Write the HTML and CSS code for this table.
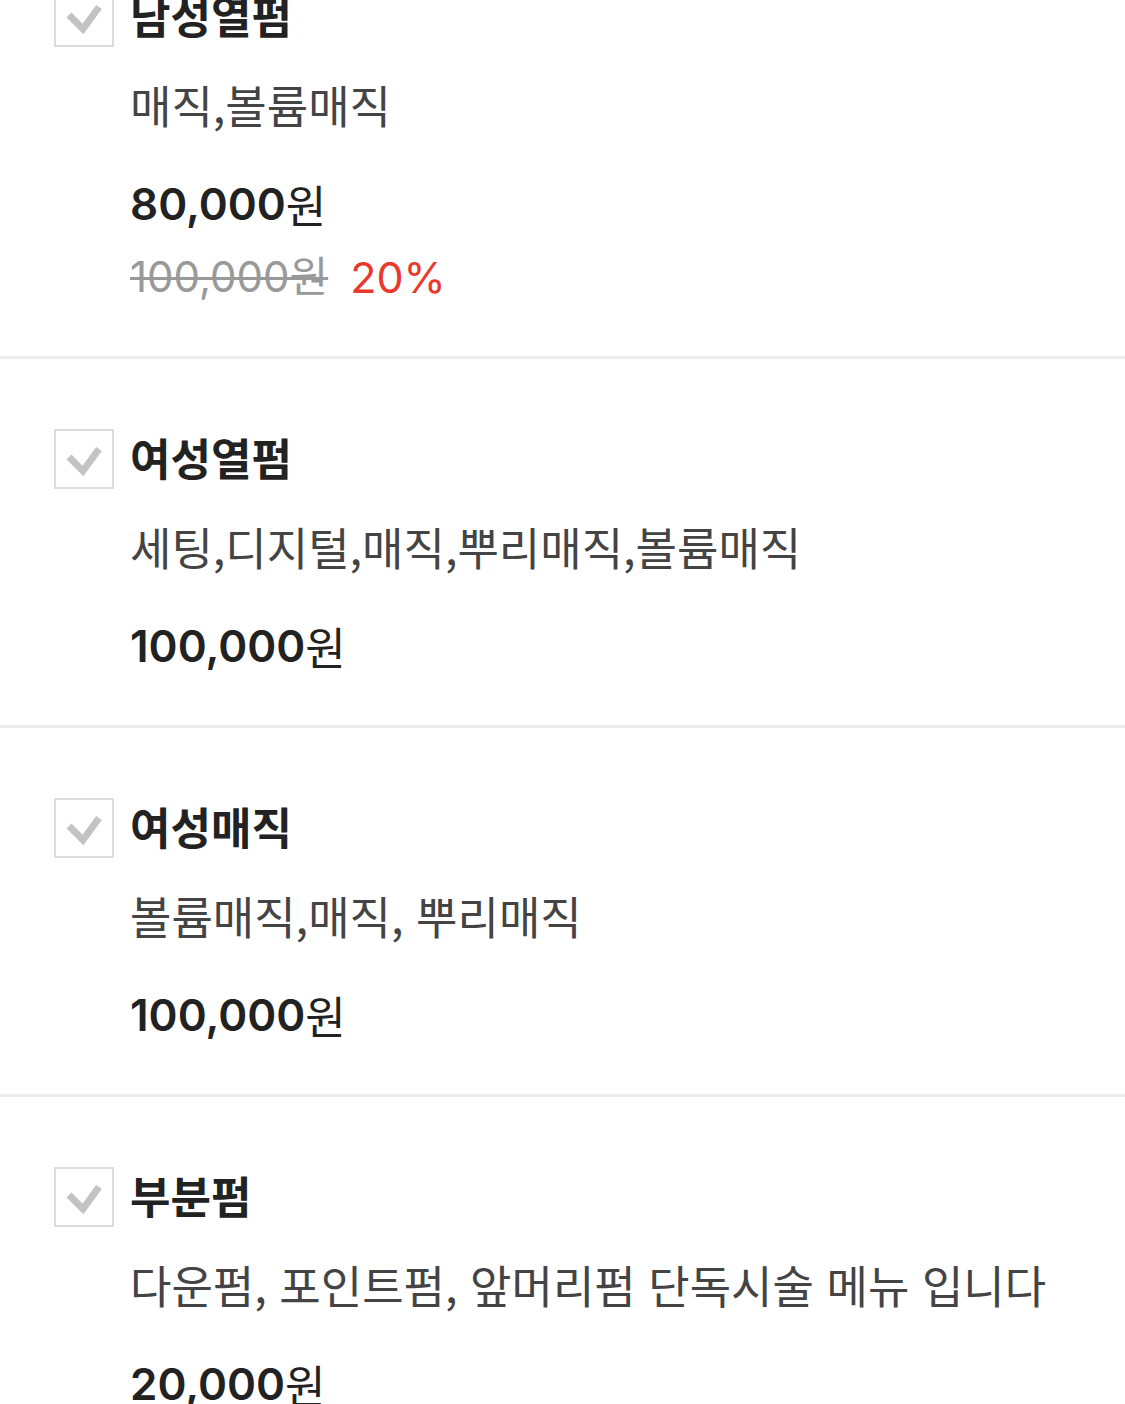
FILE: index.html
```html
<!DOCTYPE html>
<html lang="ko">
<head>
<meta charset="utf-8">
<link rel="stylesheet" href="styles.css">
</head>
<body>
<ul class="menu-list">
  <li class="item">
    <div class="head">
      <span class="check"><svg viewBox="0 0 60 60" width="60" height="60"><path d="M15 28 L29 42 L45 20" fill="none" stroke="#c3c3c3" stroke-width="7"/></svg></span>
      <span class="title">남성열펌</span>
    </div>
    <p class="desc">매직,볼륨매직</p>
    <p class="price">80,000<span class="won">원</span></p>
    <p class="sale"><span class="orig">100,000원</span><span class="rate">20%</span></p>
  </li>
  <li class="item">
    <div class="head">
      <span class="check"><svg viewBox="0 0 60 60" width="60" height="60"><path d="M15 28 L29 42 L45 20" fill="none" stroke="#c3c3c3" stroke-width="7"/></svg></span>
      <span class="title">여성열펌</span>
    </div>
    <p class="desc">세팅,디지털,매직,뿌리매직,볼륨매직</p>
    <p class="price">100,000<span class="won">원</span></p>
  </li>
  <li class="item">
    <div class="head">
      <span class="check"><svg viewBox="0 0 60 60" width="60" height="60"><path d="M15 28 L29 42 L45 20" fill="none" stroke="#c3c3c3" stroke-width="7"/></svg></span>
      <span class="title">여성매직</span>
    </div>
    <p class="desc">볼륨매직,매직, 뿌리매직</p>
    <p class="price">100,000<span class="won">원</span></p>
  </li>
  <li class="item">
    <div class="head">
      <span class="check"><svg viewBox="0 0 60 60" width="60" height="60"><path d="M15 28 L29 42 L45 20" fill="none" stroke="#c3c3c3" stroke-width="7"/></svg></span>
      <span class="title">부분펌</span>
    </div>
    <p class="desc">다운펌, 포인트펌, 앞머리펌 단독시술 메뉴 입니다</p>
    <p class="price">20,000<span class="won">원</span></p>
  </li>
</ul>
</body>
</html>
```
FILE: styles.css
```css
html, body {
  margin: 0;
  padding: 0;
  background: #fff;
}
body {
  font-family: "Noto Sans CJK KR", "Noto Sans", sans-serif;
  color: #222;
  overflow: hidden;
}
.menu-list {
  list-style: none;
  margin: -83px 0 0 0;
  padding: 0;
}
.item {
  padding: 70px 0 55px 54px;
}
.item + .item {
  border-top: 3px solid #eaedf0;
}
.head {
  display: flex;
  align-items: center;
  gap: 16px;
  height: 60px;
}
.check {
  width: 60px;
  height: 60px;
  box-sizing: border-box;
  border: 2px solid #dcdcdc;
  display: flex;
}
.check svg {
  margin: -2px;
}
.title {
  font-size: 44px;
  font-weight: 700;
  line-height: 60px;
  padding-bottom: 5px;
  color: #222;
}
.desc {
  margin: 34px 0 0 76px;
  height: 48px;
  font-size: 45px;
  line-height: 48px;
  color: #444;
  white-space: nowrap;
}
.price {
  margin: 51px 0 0 76px;
  height: 48px;
  display: flex;
  align-items: center;
  font-family: "Inter", "Noto Sans CJK KR", sans-serif;
  font-size: 44px;
  font-weight: 600;
  line-height: 48px;
  color: #222;
}
.won {
  font-family: "Noto Sans CJK KR", sans-serif;
  font-weight: 400;
}
.sale {
  margin: 25px 0 0 76px;
  height: 48px;
  font-size: 42px;
  line-height: 48px;
  display: flex;
  align-items: center;
  gap: 22px;
}
.orig {
  font-family: "Inter", "Noto Sans CJK KR", sans-serif;
  color: #999;
  text-decoration: line-through;
  text-decoration-thickness: 3px;
}
.rate {
  font-family: "Inter", sans-serif;
  font-size: 43px;
  color: #e8392c;
}
```
